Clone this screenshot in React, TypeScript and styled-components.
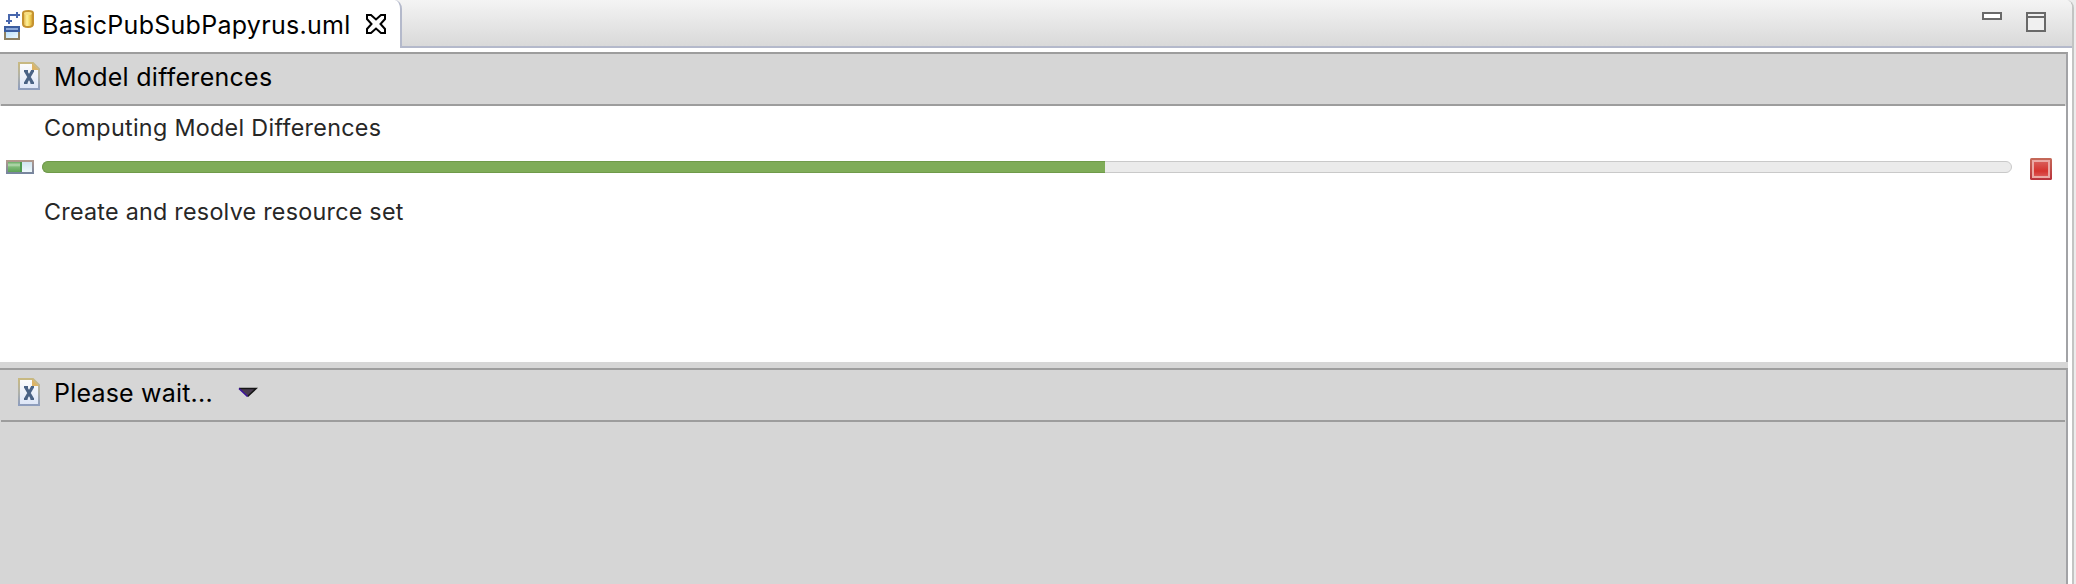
import React from "react";
import styled, { createGlobalStyle } from "styled-components";

const GlobalStyle = createGlobalStyle`
  * { box-sizing: border-box; }
  body { margin: 0; background: #ececec; overflow: hidden; }
  svg { display: block; flex: none; }
`;

const Workbench = styled.div`
  display: flex;
  flex-direction: column;
  width: 2074px;
  height: 584px;
  background: #fff;
  border-right: 2px solid #c3c4c3;
  border-top-right-radius: 8px;
  overflow: hidden;
  font-family: Inter, "Liberation Sans", sans-serif;
  color: #000;
`;

const TabBar = styled.header`
  display: flex;
  height: 48px;
  background: linear-gradient(#f4f4f4, #d9d9d9 46px);
`;

const Tab = styled.div`
  display: flex;
  align-items: flex-start;
  width: 402px;
  padding-left: 4px;
  background: #fff;
  border-right: 2px solid #b4b9cb;
  border-top-right-radius: 7px 9px;
`;

const TabIcon = styled.svg`
  margin-top: 10px;
`;

const Label = styled.span<{ $spacing: number }>`
  font-size: 25px;
  line-height: 30px;
  letter-spacing: ${(p) => p.$spacing}px;
  white-space: nowrap;
`;

const TabLabel = styled(Label)`
  width: 324px;
  margin: 10px 0 0 6px;
`;

const CloseIcon = styled.svg`
  margin-top: 14px;
`;

const TabActions = styled.div`
  display: flex;
  flex: 1;
  justify-content: flex-end;
  align-items: flex-start;
  gap: 24px;
  padding: 12px 26px 0 0;
  border-bottom: 2px solid #b4b9cb;
`;

const Editor = styled.main`
  display: flex;
  flex: 1;
  flex-direction: column;
  width: 2068px;
  padding-top: 4px;
`;

const Panel = styled.section<{ $height: number; $fill: string }>`
  height: ${(p) => p.$height}px;
  background: ${(p) => p.$fill};
  border-top: 2px solid #9d9d9d;
  border-right: 2px solid #a2a3a6;
`;

const Sash = styled.div`
  height: 6px;
  background: #d6d6d6;
`;

const PanelHeader = styled.div`
  display: flex;
  align-items: flex-start;
  height: 52px;
  padding: 8px 0 0 18px;
  gap: 14px;
  background:
    linear-gradient(#9d9d9d, #9d9d9d) 1px 100% / 2064px 2px no-repeat,
    #d6d6d6;
`;

const MenuArrow = styled.svg`
  margin: 9px 0 0 11px;
`;

const ProgressItem = styled.div`
  display: flex;
  flex-direction: column;
  padding-top: 8px;
`;

const ProgressText = styled.p<{ $spacing: number }>`
  margin: 0 0 0 44px;
  font-size: 23.3px;
  line-height: 28px;
  letter-spacing: ${(p) => p.$spacing}px;
  color: #272727;
`;

const ProgressRow = styled.div`
  display: flex;
  align-items: flex-start;
  height: 56px;
  padding: 18px 0 0 6px;
`;

const Track = styled.div`
  width: 1970px;
  height: 12px;
  margin: 1px 18px 0 8px;
  background: #ebebeb;
  border: 1px solid #c9c9c9;
  border-radius: 6px;
`;

const Fill = styled.div`
  width: 1063px;
  height: 12px;
  margin: -1px 0 0 -1px;
  background: #7fac58;
  border: solid #6f9a49;
  border-width: 1px 0 1px 1px;
  border-radius: 6px 0 0 6px;
`;

const StopIcon = styled.svg`
  margin-top: -2px;
`;

const ModelIcon = () => (
  <TabIcon width="32" height="30" viewBox="0 0 32 30">
    <defs>
      <linearGradient id="cyl">
        <stop offset="0" stopColor="#dca83a" />
        <stop offset=".4" stopColor="#fff29a" />
        <stop offset=".7" stopColor="#f0cf55" />
        <stop offset="1" stopColor="#c78f2a" />
      </linearGradient>
      <linearGradient id="box" x1="0" y1="0" x2="1" y2="1">
        <stop offset="0" stopColor="#b7defa" />
        <stop offset="1" stopColor="#f1faff" />
      </linearGradient>
    </defs>
    <path d="M5 13V5H14" fill="none" stroke="#4867ad" strokeWidth="2" />
    <path d="M2 10H8V12H6V14H4V12H2ZM12 2H14V4H16V6H14V8H12Z" fill="#4867ad" />
    <path d="M19 3Q19 1 24.500 1Q29 1 29 3V14Q29 17 24 17Q19 17 19 14Z" fill="url(#cyl)" stroke="#c5922f" strokeWidth="2" />
    <ellipse cx="24" cy="3.500" rx="3.800" ry="1.500" fill="#f8df83" />
    <rect x="1" y="21" width="14" height="8" fill="url(#box)" stroke="#8d8062" strokeWidth="2" />
    <rect x="0" y="16" width="16" height="6" fill="#3b5d9f" />
    <rect x="2" y="18" width="12" height="2" fill="#8ba8d8" />
  </TabIcon>
);

const FileIcon = () => (
  <svg width="22" height="28" viewBox="0 0 22 28">
    <defs>
      <linearGradient id="edge" x1="0" y1="0" x2="0" y2="1">
        <stop offset="0" stopColor="#c8b981" />
        <stop offset=".5" stopColor="#b0b1a8" />
        <stop offset="1" stopColor="#8d9dbd" />
      </linearGradient>
      <linearGradient id="page" x1="0" y1="0" x2="0" y2="1">
        <stop offset="0" stopColor="#fdfdfc" />
        <stop offset="1" stopColor="#dce5f7" />
      </linearGradient>
    </defs>
    <path d="M1 1H15L21 7V27H1Z" fill="url(#page)" stroke="url(#edge)" strokeWidth="2" />
    <path d="M14 1L21 8H14Z" fill="#dcb467" />
    <path d="M7.500 9L14.500 21M14.500 9L7.500 21" stroke="#4a6385" strokeWidth="3.200" />
    <path d="M6 9H10M13 9H16M6 21H9.500M12.500 21H16" stroke="#4a6385" strokeWidth="2" />
  </svg>
);

const ProgressIcon = () => (
  <svg width="28" height="14" viewBox="0 0 28 14">
    <defs>
      <linearGradient id="frame" x1="0" y1="0" x2="0" y2="1">
        <stop offset="0" stopColor="#b49a8b" />
        <stop offset="1" stopColor="#74849f" />
      </linearGradient>
      <linearGradient id="done" x1="0" y1="0" x2="0" y2="1">
        <stop offset="0" stopColor="#68ab63" />
        <stop offset=".3" stopColor="#b7dab1" />
        <stop offset=".5" stopColor="#7dba76" />
        <stop offset="1" stopColor="#5da255" />
      </linearGradient>
      <linearGradient id="rest" x1="0" y1="0" x2="0" y2="1">
        <stop offset="0" stopColor="#cfe5f0" />
        <stop offset="1" stopColor="#eff9fc" />
      </linearGradient>
    </defs>
    <rect width="28" height="14" fill="url(#frame)" />
    <rect x="2" y="2" width="12" height="10" fill="url(#done)" />
    <rect x="14" y="2" width="2" height="10" fill="#4f9b50" />
    <rect x="16" y="2" width="10" height="10" fill="url(#rest)" />
  </svg>
);

const Stop = () => (
  <StopIcon width="22" height="22" viewBox="0 0 22 22">
    <defs>
      <linearGradient id="rim" x1="0" y1="0" x2="0" y2="1">
        <stop offset="0" stopColor="#c56a59" />
        <stop offset="1" stopColor="#b9323b" />
      </linearGradient>
      <linearGradient id="core" x1="0" y1="0" x2="0" y2="1">
        <stop offset="0" stopColor="#d95c58" />
        <stop offset=".65" stopColor="#d5332f" />
        <stop offset="1" stopColor="#dc5452" />
      </linearGradient>
    </defs>
    <rect width="22" height="22" rx="1.500" fill="url(#rim)" />
    <rect x="2" y="2" width="18" height="18" fill="#eba9a5" />
    <rect x="4" y="4" width="14" height="14" fill="url(#core)" />
  </StopIcon>
);

export default function App() {
  return (
    <>
      <GlobalStyle />
      <Workbench>
        <TabBar>
          <Tab>
            <ModelIcon />
            <TabLabel as="div" $spacing={0.28}>BasicPubSubPapyrus.uml</TabLabel>
            <CloseIcon width="20" height="20" viewBox="0 0 20 20">
              <path
                d="M1 1H5L10 5.500L15 1H19V5L14.500 10L19 15V19H15L10 14.500L5 19H1V15L5.500 10L1 5Z"
                fill="#fff"
                stroke="#000"
                strokeWidth="2"
              />
            </CloseIcon>
          </Tab>
          <TabActions>
            <svg width="20" height="8" viewBox="0 0 20 8">
              <rect x="1" y="1" width="18" height="6" fill="#fff" stroke="#696969" strokeWidth="2" />
            </svg>
            <svg width="20" height="20" viewBox="0 0 20 20">
              <rect x="1" y="1" width="18" height="18" fill="#f0f0f0" stroke="#696969" strokeWidth="2" />
              <path d="M1 5H19" stroke="#696969" strokeWidth="2" />
            </svg>
          </TabActions>
        </TabBar>
        <Editor>
          <Panel $height={310} $fill="#fff">
            <PanelHeader>
              <FileIcon />
              <Label $spacing={0.28}>Model differences</Label>
            </PanelHeader>
            <ProgressItem>
              <ProgressText $spacing={0.31}>Computing Model Differences</ProgressText>
              <ProgressRow>
                <ProgressIcon />
                <Track>
                  <Fill />
                </Track>
                <Stop />
              </ProgressRow>
              <ProgressText $spacing={0.26}>Create and resolve resource set</ProgressText>
            </ProgressItem>
          </Panel>
          <Sash />
          <Panel $height={216} $fill="#d6d6d6">
            <PanelHeader>
              <FileIcon />
              <Label $spacing={0.2}>Please wait...</Label>
              <MenuArrow width="20" height="12" viewBox="0 0 20 12">
                <path d="M1.500 1.500H17.500L9.500 9Z" fill="#493c50" />
                <path d="M1 1.500H18L9.500 9.500" fill="none" stroke="#151515" strokeWidth="1.700" />
                <path d="M1 1.500L9.500 9.500" stroke="#39109a" strokeWidth="1.700" />
              </MenuArrow>
            </PanelHeader>
          </Panel>
        </Editor>
      </Workbench>
    </>
  );
}
